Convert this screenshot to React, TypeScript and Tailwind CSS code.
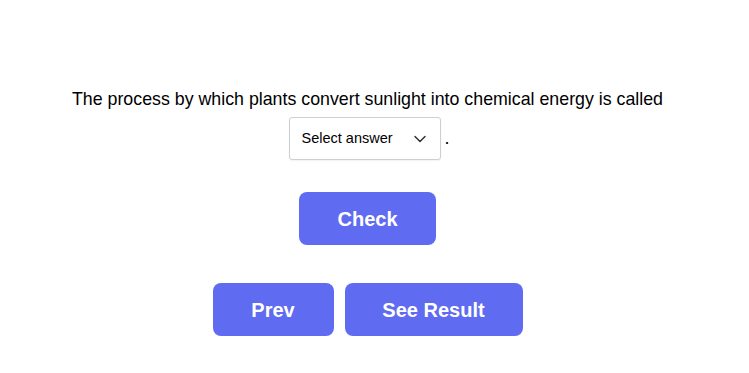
import { ChevronDown } from "lucide-react";

function PrimaryButton({ label, className }: { label: string; className?: string }) {
  return (
    <button
      type="button"
      className={
        "h-[53px] rounded-lg bg-[#5f6bf0] px-[37px] text-[20px] font-bold text-white " +
        (className ?? "")
      }
    >
      {label}
    </button>
  );
}

export default function App() {
  return (
    <div className="flex min-h-[373px] flex-col items-center bg-white pr-[14px] pt-[88px] font-['Liberation_Sans',Arial,sans-serif] text-black">
      <p className="text-center text-[17.8px] leading-[22px]">
        The process by which plants convert sunlight into chemical energy is called
      </p>
      <div className="ml-[4px] mt-[7px] flex items-center gap-[3px]">
        <div className="flex h-[43px] w-[152px] items-center justify-between rounded-[3px] border border-[#cfcfcf] bg-white pl-[11px] pr-[10px] shadow-[0_1px_2px_rgba(0,0,0,0.06)]">
          <span className="text-[14.5px]">Select answer</span>
          <ChevronDown className="size-[20px] text-[#333]" strokeWidth={1.8} />
        </div>
        <span className="text-[18px]">.</span>
      </div>
      <PrimaryButton label="Check" className="mt-[32px] w-[137px]" />
      <div className="mt-[38px] flex gap-[11px]">
        <PrimaryButton label="Prev" className="w-[121px]" />
        <PrimaryButton label="See Result" className="w-[178px]" />
      </div>
    </div>
  );
}
